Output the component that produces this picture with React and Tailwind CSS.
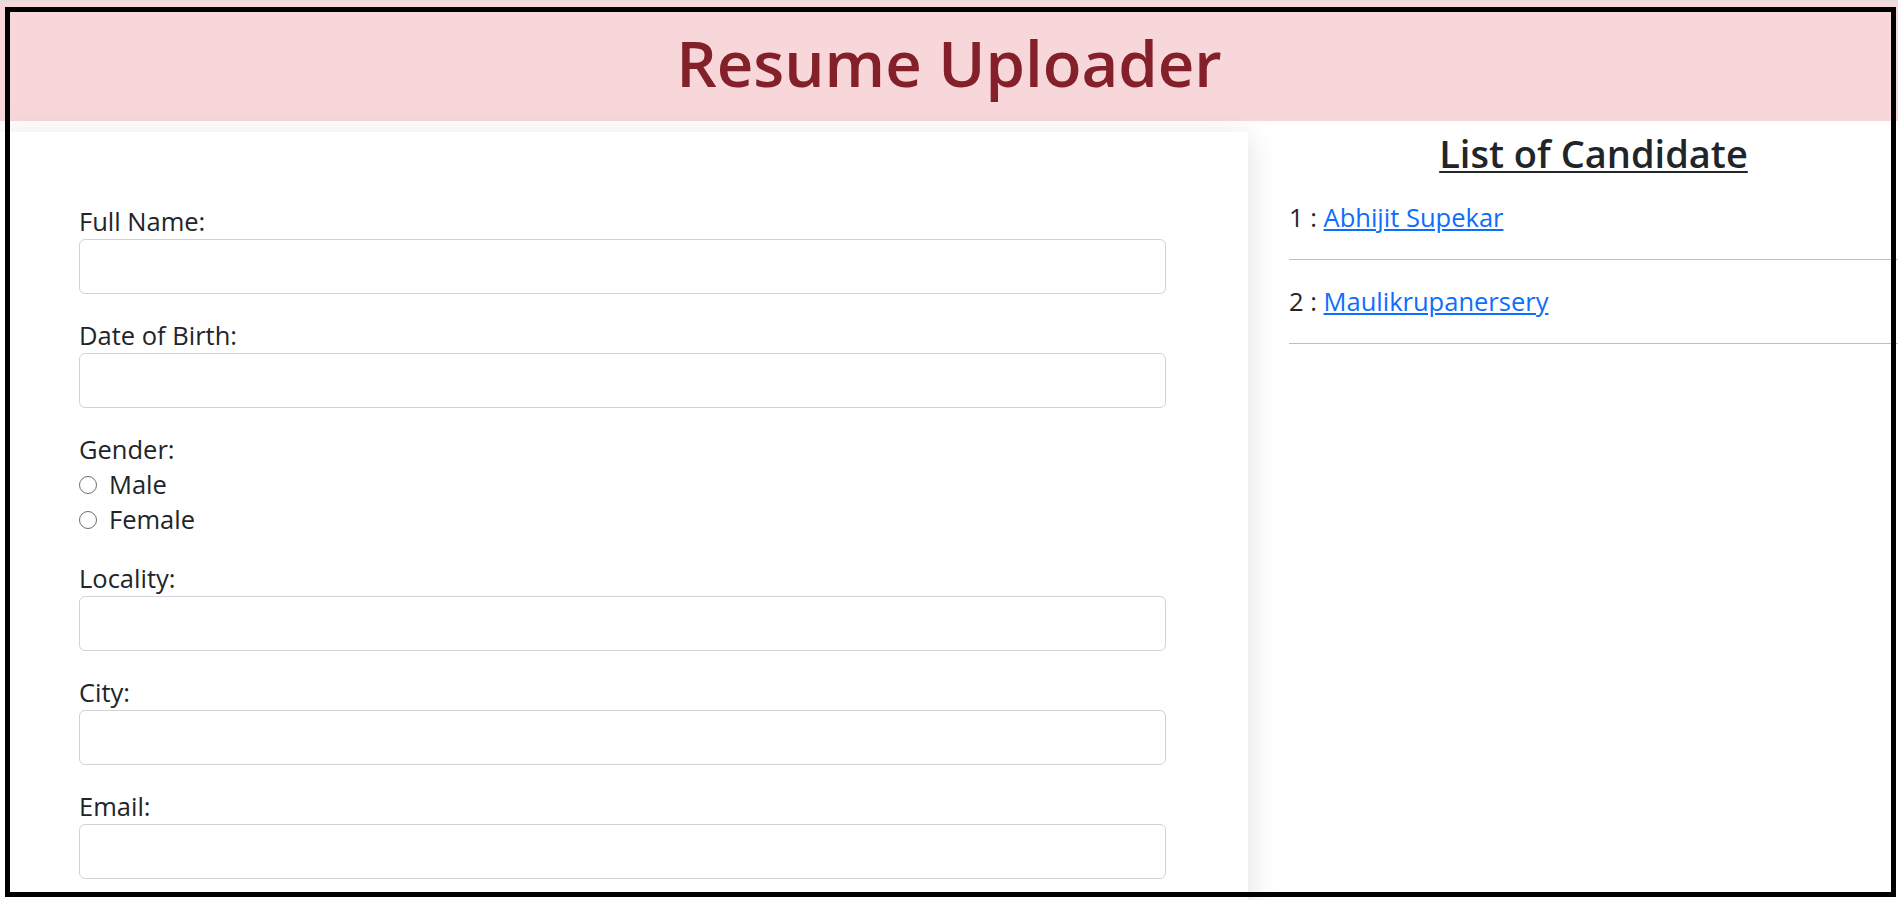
import React from 'react';

const fields = ['Full Name:', 'Date of Birth:'];
const fieldsAfter = ['Locality:', 'City:', 'Email:'];

const candidates = [
  { id: 1, name: 'Abhijit Supekar' },
  { id: 2, name: 'Maulikrupanersery' },
];

const Field = ({ label }) => (
  <div className="mb-[24px]">
    <label className="block h-[35px] leading-[35px] text-[25.5px] text-[#212529]">{label}</label>
    <input
      type="text"
      className="block w-full h-[55px] rounded-[6px] border border-[#ced4da] bg-white outline-none"
    />
  </div>
);

const Radio = ({ label }) => (
  <label className="flex items-center h-[35px] text-[25.5px] text-[#212529]">
    <span className="shrink-0 w-[18px] h-[18px] rounded-full border-[1.5px] border-[#6f6f6f] bg-white"></span>
    <span className="ml-[12px] leading-[35px]">{label}</span>
  </label>
);

const App = () => {
  return (
    <div className="relative h-[900px] overflow-hidden bg-white font-['Open_Sans',sans-serif]">
      <div className="h-[2px] bg-[#dedede]"></div>

      {/* Header */}
      <header className="h-[119px] bg-[#f8d7da] pt-[30px] text-center">
        <h1 className="text-[63.5px] leading-[62px] font-semibold text-[#842029]">Resume Uploader</h1>
      </header>

      <div className="flex">
        {/* Form card */}
        <div className="w-[1248px] h-[800px] mt-[11px] bg-white shadow-[0_6px_30px_rgba(0,0,0,0.13)] pl-[79px] pr-[82px] pt-[72px]">
          <form>
            {fields.map((f) => (
              <Field key={f} label={f} />
            ))}
            <div className="mb-[24px]">
              <div className="h-[35px] leading-[35px] text-[25.5px] text-[#212529]">Gender:</div>
              <Radio label="Male" />
              <Radio label="Female" />
            </div>
            {fieldsAfter.map((f) => (
              <Field key={f} label={f} />
            ))}
          </form>
        </div>

        {/* Candidate list */}
        <div className="flex-1 pl-[41px] pt-[11px]">
          <h3 className="text-center text-[38px] leading-[42px] font-semibold text-[#212529] underline decoration-2 underline-offset-[3px]">
            List of Candidate
          </h3>
          <div className="mt-[26px]">
            {candidates.map((c) => (
              <div key={c.id}>
                <div className="h-[35px] leading-[35px] text-[25.5px] text-[#212529]">
                  {c.id} : <a href="#" className="text-[#0d6efd] underline">{c.name}</a>
                </div>
                <hr className="my-[24px] border-0 border-t border-[#bfbfbf]" />
              </div>
            ))}
          </div>
        </div>
      </div>

      {/* Outer frame */}
      <div className="pointer-events-none absolute left-[5px] top-[7px] w-[1891px] h-[890px] border-[5px] border-black"></div>
    </div>
  );
};

export default App;
